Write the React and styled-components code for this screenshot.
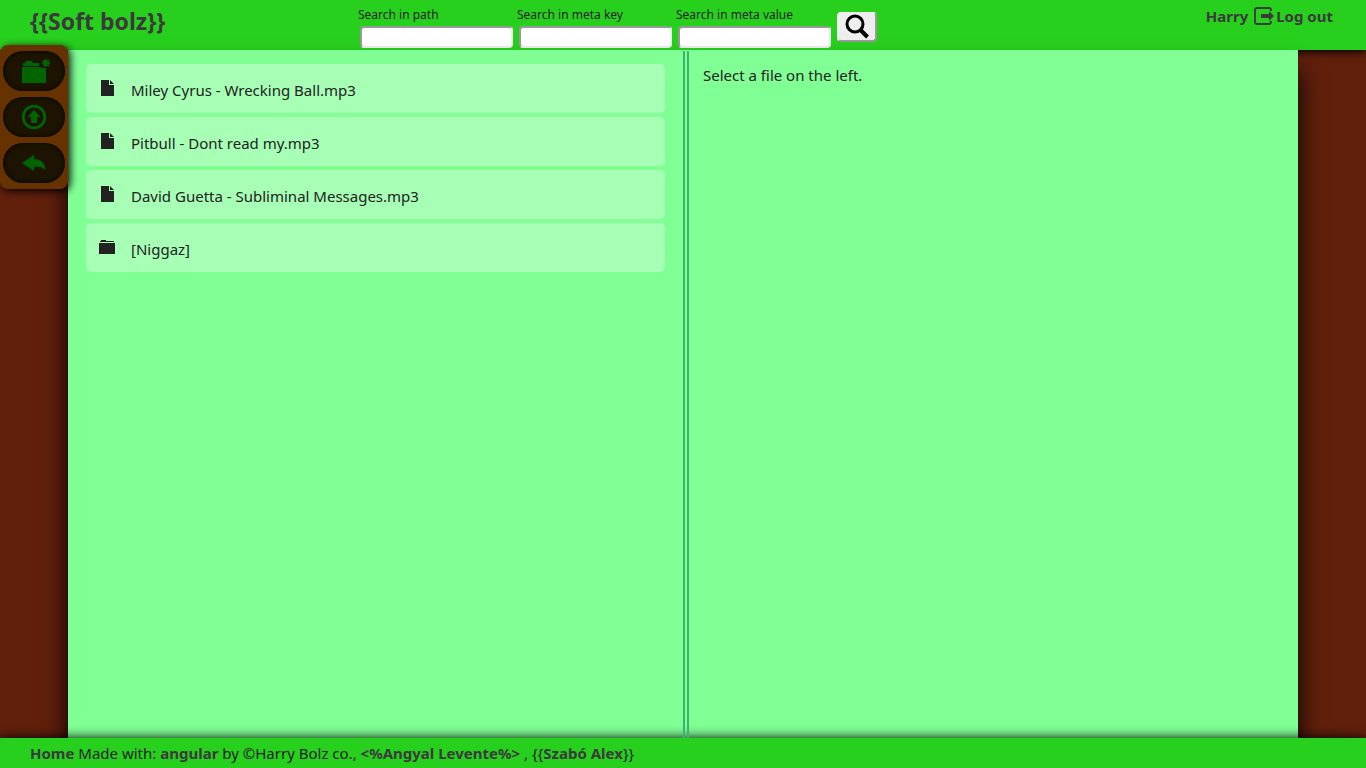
import React from "react";
import styled, { createGlobalStyle } from "styled-components";

const GlobalStyle = createGlobalStyle`
  *, *::before, *::after { box-sizing: border-box; }
  html, body, #root { height: 100%; }
  body {
    margin: 0;
    background: #62200c;
    color: #222;
    font: 370 15px/20px "Noto Sans", "Open Sans", sans-serif;
  }
`;

const Page = styled.div`
  min-height: 100%;
  display: flex;
  flex-direction: column;
`;

const Header = styled.header`
  flex: none;
  height: 50px;
  display: flex;
  align-items: flex-start;
  padding: 0 33px 0 30px;
  background: #28d01e;
  box-shadow: 0 2px 8px #000;
`;

const Title = styled.h1`
  flex: none;
  width: 328px;
  margin: 0;
  padding-top: 6px;
  color: #3a3a3a;
  font-size: 23px;
  line-height: 30px;
  font-weight: 700;
`;

const SearchForm = styled.form`
  flex: 1;
  display: flex;
  gap: 4px;
`;

const Field = styled.label`
  width: 155px;
  padding-top: 7px;
  font-size: 12px;
  line-height: 16px;
  font-weight: 400;
`;

const FieldInput = styled.input`
  appearance: none;
  display: block;
  width: 153px;
  height: 22px;
  margin: 3px 0 0 2px;
  padding: 1px 4px;
  border: 2px solid;
  border-color: #999 #eee #eee #999;
  border-radius: 4px;
  background: #fff;
`;

const SearchButton = styled.button`
  width: 40px;
  height: 30px;
  margin: 12px 0 0 2px;
  padding: 0;
  display: flex;
  align-items: center;
  justify-content: center;
  border: 2px solid;
  border-color: #eee #999 #999 #eee;
  border-radius: 4px;
  background: #eee;
  color: #000;
`;

const UserArea = styled.nav`
  display: flex;
  align-items: center;
  padding-top: 5px;
  gap: 6px;
  color: #3a3a3a;
  font-weight: 700;
`;

const BoldLink = styled.a`
  color: #3a3a3a;
  font-weight: 700;
  text-decoration: none;
`;

const LogoutLink = styled(BoldLink)`
  display: flex;
  align-items: center;
`;

const Main = styled.main`
  flex: 1;
  display: flex;
  margin: 0 68px;
  background: #80ff95;
  position: relative;
  box-shadow: 0 20px 24px #000;
`;

const FilePane = styled.section`
  flex: 0 0 50%;
  padding: 14px 18px;
`;

const Divider = styled.div`
  flex: none;
  position: relative;
  z-index: 1;
  width: 6px;
  margin-top: 1px;
  border: solid #3cb371;
  border-width: 0 2px;
`;

const DetailPane = styled.section`
  flex: 1;
  padding: 15px 14px;
`;

const Note = styled.p`
  margin: 0;
`;

const FileList = styled.ul`
  margin: 0;
  padding: 0;
  list-style: none;
  display: grid;
  gap: 4px;
`;

const FileRow = styled.li`
  height: 49px;
  display: flex;
  gap: 15px;
  padding: 16px 12px;
  border-radius: 5px;
  background: rgba(255, 255, 255, 0.3);
`;

const SideTools = styled.aside`
  position: absolute;
  z-index: 2;
  left: 0;
  top: 45px;
  width: 68px;
  padding: 6px 3px;
  display: grid;
  gap: 6px;
  border-radius: 8px;
  background: #663300;
  box-shadow: 2px 2px 8px #000;
`;

const ToolButton = styled.button`
  height: 40px;
  padding: 0;
  display: flex;
  align-items: center;
  justify-content: center;
  border: 0;
  border-radius: 20px;
  background: #1c1400;
  color: #006400;
  box-shadow: inset 0 0 4px #000;
`;

const Footer = styled.footer`
  flex: none;
  position: relative;
  height: 30px;
  padding: 5px 30px;
  background: #28d01e;
  box-shadow: 0 0 12px #000;
`;

const FileIcon = () => (
  <svg width="18" height="16" viewBox="0 0 18 16" fill="#222" aria-hidden="true">
    <path d="M3 0h8v5h5v11H3zM12 0l4 4h-4z" />
  </svg>
);

const FolderIcon = () => (
  <svg width="18" height="16" viewBox="0 0 18 16" fill="#222" aria-hidden="true">
    <path d="M2 3V2h1V1h5v1h8v1zM1 4h16v11H1z" />
  </svg>
);

const NewFolderIcon = () => (
  <svg width="32" height="28" viewBox="0 0 32 28" fill="currentColor" aria-hidden="true">
    <path d="M5 9V6h2l1-2h6l1 2h6v2l1 1zM4 10h19l2 1h3v15H4z" />
    <path d="M28 2v8M24 6h8M25 3l6 6M31 3l-6 6" stroke="currentColor" strokeWidth="1.500" />
    <circle cx="28" cy="6" r="3" />
  </svg>
);

const UploadIcon = () => (
  <svg width="26" height="26" viewBox="0 0 26 26" fill="currentColor" aria-hidden="true">
    <circle cx="13" cy="13" r="10.800" fill="none" stroke="currentColor" strokeWidth="2.800" />
    <path d="M13 6l6.500 7H16v6h-6v-6H6.500z" />
  </svg>
);

const BackIcon = () => (
  <svg width="24" height="18" viewBox="0 0 24 18" fill="currentColor" aria-hidden="true">
    <path d="M0 9L12 1v4c7 0 11 4 11.500 11-3-3-6-4-11.500-3v4z" />
  </svg>
);

const SearchIcon = () => (
  <svg width="26" height="26" viewBox="0 0 26 26" fill="none" stroke="currentColor" aria-hidden="true">
    <circle cx="11" cy="10" r="8" strokeWidth="3" />
    <path d="M16.500 16l7 7" strokeWidth="4" />
  </svg>
);

const LogoutIcon = () => (
  <svg width="22" height="22" viewBox="0 0 22 22" aria-hidden="true">
    <path
      d="M17 6V5q0-2-2-2H3Q1 3 1 5v12q0 2 2 2h12q2 0 2-2v-1"
      fill="none"
      stroke="#3a3a3a"
      strokeWidth="1.800"
    />
    <path d="M7 9h8V6l5 5-5 5v-3H7z" fill="#3a3a3a" />
  </svg>
);

const fields = ["Search in path", "Search in meta key", "Search in meta value"];

const files = [
  { name: "Miley Cyrus - Wrecking Ball.mp3" },
  { name: "Pitbull - Dont read my.mp3" },
  { name: "David Guetta - Subliminal Messages.mp3" },
  { name: "[Niggaz]", folder: true },
];

const tools = [
  { label: "New folder", Icon: NewFolderIcon },
  { label: "Upload", Icon: UploadIcon },
  { label: "Back", Icon: BackIcon },
];

export default function App() {
  return (
    <Page>
      <GlobalStyle />
      <Header>
        <Title>{"{{Soft bolz}}"}</Title>
        <SearchForm onSubmit={(e) => e.preventDefault()}>
          {fields.map((label) => (
            <Field key={label}>
              {label}
              <FieldInput type="text" />
            </Field>
          ))}
          <SearchButton type="submit" aria-label="Search">
            <SearchIcon />
          </SearchButton>
        </SearchForm>
        <UserArea>
          <span>Harry</span>
          <LogoutLink href="#logout">
            <LogoutIcon />
            Log out
          </LogoutLink>
        </UserArea>
      </Header>
      <SideTools>
        {tools.map(({ label, Icon }) => (
          <ToolButton key={label} type="button" aria-label={label}>
            <Icon />
          </ToolButton>
        ))}
      </SideTools>
      <Main>
        <FilePane>
          <FileList>
            {files.map(({ name, folder }) => (
              <FileRow key={name}>
                {folder ? <FolderIcon /> : <FileIcon />}
                <span>{name}</span>
              </FileRow>
            ))}
          </FileList>
        </FilePane>
        <Divider />
        <DetailPane>
          <Note>Select a file on the left.</Note>
        </DetailPane>
      </Main>
      <Footer>
        <BoldLink href="#home">Home</BoldLink> Made with: <BoldLink href="#angular">angular</BoldLink>{" "}
        by ©Harry Bolz co., <BoldLink href="#levente">{"<%Angyal Levente%>"}</BoldLink> , {"{{"}
        <BoldLink href="#alex">Szabó Alex</BoldLink>
        {"}}"}
      </Footer>
    </Page>
  );
}
